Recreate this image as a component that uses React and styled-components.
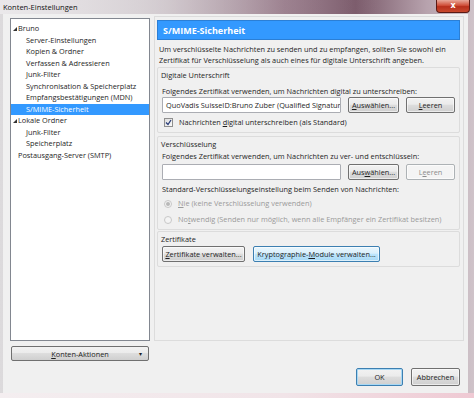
import React from "react";
import styled, { createGlobalStyle } from "styled-components";

const Global = createGlobalStyle`
  html, body { margin: 0; padding: 0; }
  body {
    width: 474px; height: 398px; overflow: hidden;
    background: linear-gradient(90deg, #f4eef0 0%, #f1e4e8 60%, #efc9d3 100%);
    font-family: "Open Sans", "Noto Sans", sans-serif;
    font-size: 7.35px;
    color: #1e1e1e;
  }
`;

const Window = styled.div`
  width: 474px;
  height: 393px;
  display: flex;
  flex-direction: column;
  background: linear-gradient(90deg, #dcdadc 0%, #c9c1c6 30%, #9c8290 60%, #7a5a6a 75%, #b7a2ad 90%, #cfc3c9 100%);
`;

const TitleBar = styled.div`
  height: 14px;
  display: flex;
  align-items: center;
  justify-content: space-between;
  padding-left: 3px;
  font-size: 7.5px;
  color: #111;
  background: linear-gradient(90deg, rgba(235,233,235,0.95) 0%, rgba(220,214,218,0.6) 35%, rgba(160,130,145,0.3) 60%, rgba(0,0,0,0) 80%);
`;

const CloseBtn = styled.div`
  width: 32px;
  height: 12px;
  margin-right: 4px;
  align-self: flex-start;
  border: 1px solid #5a1a14;
  border-top: none;
  border-radius: 0 0 4px 4px;
  background: linear-gradient(#e8a89a 0%, #d0503a 45%, #b8301c 55%, #c8482e 100%);
  color: #fff;
  font-family: "DejaVu Sans", sans-serif;
  font-weight: bold;
  font-size: 8px;
  display: flex;
  align-items: center;
  justify-content: center;
  line-height: 1;
`;

const Body = styled.div`
  flex: 1;
  margin: 0 6px 0 3px;
  background: #f0f0f0;
  display: flex;
  flex-direction: column;
  padding: 2px 0 0 7px;
`;

const Main = styled.div`
  display: flex;
  gap: 4px;
  height: 348px;
`;

const LeftCol = styled.div`
  width: 140px;
  display: flex;
  flex-direction: column;
  padding-top: 2px;
`;

const Tree = styled.div`
  height: 323px;
  background: #fff;
  border: 1px solid #828790;
  padding-top: 4px;
  box-sizing: border-box;
`;

const TreeItem = styled.div`
  height: 11.5px;
  line-height: 11.5px;
  padding-left: ${p => p.$level === 1 ? 15 : 7}px;
  display: flex;
  align-items: center;
  background: ${p => p.$selected ? "#3399ff" : "transparent"};
  color: ${p => p.$selected ? "#fff" : "#1e1e1e"};
  white-space: nowrap;
`;

const Twisty = styled.svg`
  width: 4px;
  height: 4px;
  margin-left: -5px;
  margin-right: 1px;
`;

const ActionsBtn = styled.div`
  margin-top: 5px;
  height: 15px;
  margin-left: 1px;
  margin-right: 1px;
  border: 1px solid #707070;
  border-radius: 2px;
  background: linear-gradient(#f2f2f2 0%, #ebebeb 45%, #dddddd 50%, #cfcfcf 100%);
  display: flex;
  align-items: center;
  justify-content: center;
  position: relative;
  box-sizing: border-box;
`;

const DropArrow = styled.span`
  position: absolute;
  right: 6px;
  top: 3px;
  font-size: 6px;
`;

const RightPanel = styled.div`
  width: 310px;
  height: 325px;
  border: 1px solid #dcdcdc;
  box-sizing: border-box;
  padding: 3px 3px 0 2px;
  display: flex;
  flex-direction: column;
`;

const Header = styled.div`
  height: 20px;
  background: #3399ff;
  border: 1px solid #2b7fd6;
  box-sizing: border-box;
  color: #fff;
  font-weight: bold;
  font-size: 9px;
  display: flex;
  align-items: center;
  padding-left: 5px;
`;

const Desc = styled.div`
  margin-top: 4px;
  padding-left: 2px;
  line-height: 10.5px;
`;

const Group = styled.div`
  margin-top: ${p => p.$mt || 3}px;
  border: 1px solid #dcdcdc;
  border-radius: 2px;
  padding: 2px 4px 4px 4px;
  display: flex;
  flex-direction: column;
`;

const Caption = styled.div`
  line-height: 11px;
  margin-left: -1px;
  margin-bottom: ${p => p.$mb ?? 1}px;
`;

const Label = styled.div`
  line-height: 11px;
  margin-top: ${p => p.$mt || 0}px;
  color: ${p => p.$disabled ? "#9a9a9a" : "#1e1e1e"};
`;

const Row = styled.div`
  display: flex;
  align-items: center;
  gap: ${p => p.$gap || 7}px;
  margin-top: ${p => p.$mt || 0}px;
  padding-left: ${p => p.$indent || 0}px;
`;

const Input = styled.div`
  width: 181px;
  height: 16px;
  box-sizing: border-box;
  background: #fff;
  border: 1px solid #abadb3;
  border-radius: 1px;
  display: flex;
  align-items: center;
  padding-left: 3px;
  white-space: nowrap;
  overflow: hidden;
  text-overflow: clip;
`;

const Button = styled.div`
  width: ${p => p.$w}px;
  height: ${p => p.$h || 16}px;
  box-sizing: border-box;
  border: 1px solid ${p => p.$variant === "hover" ? "#3c7fb1" : p.$variant === "default" ? "#3c7fb1" : p.$disabled ? "#adb2b5" : "#707070"};
  border-radius: 2px;
  background: ${p => p.$variant === "hover"
    ? "linear-gradient(#eaf6fd 0%, #d9f0fc 45%, #bee6fd 50%, #a7d9f5 100%)"
    : p.$disabled
      ? "#f4f4f4"
      : "linear-gradient(#f2f2f2 0%, #ebebeb 45%, #dddddd 50%, #cfcfcf 100%)"};
  box-shadow: ${p => p.$variant === "default" ? "inset 0 0 0 1px #a8d8f4" : "inset 0 0 0 1px rgba(255,255,255,0.6)"};
  color: ${p => p.$disabled ? "#8d8d8d" : "#1e1e1e"};
  display: flex;
  align-items: center;
  justify-content: center;
  white-space: nowrap;
  flex-shrink: 0;
`;

const Check = styled.div`
  width: 9px;
  height: 9px;
  box-sizing: border-box;
  border: 1px solid #8f8f8f;
  background: linear-gradient(135deg, #dcdcdc, #fbfbfb);
  display: flex;
  align-items: center;
  justify-content: center;
`;

const Radio = styled.div`
  width: 8px;
  height: 8px;
  border-radius: 50%;
  box-sizing: border-box;
  border: 1px solid #c8c8c8;
  background: #f4f4f4;
  display: flex;
  align-items: center;
  justify-content: center;
  &::after {
    content: "";
    display: ${p => p.$checked ? "block" : "none"};
    width: 4px; height: 4px; border-radius: 50%;
    background: #b8b8b8;
  }
`;

const Spacer = styled.div`flex: 1;`;

const Footer = styled.div`
  display: flex;
  justify-content: flex-end;
  gap: 8px;
  padding-right: 8px;
  margin-top: 4px;
`;

const U = styled.span`text-decoration: underline;`;

const tree = [
  { label: "Bruno", level: 0, twisty: true },
  { label: "Server-Einstellungen", level: 1 },
  { label: "Kopien & Ordner", level: 1 },
  { label: "Verfassen & Adressieren", level: 1 },
  { label: "Junk-Filter", level: 1 },
  { label: "Synchronisation & Speicherplatz", level: 1 },
  { label: "Empfangsbestätigungen (MDN)", level: 1 },
  { label: "S/MIME-Sicherheit", level: 1, selected: true },
  { label: "Lokale Ordner", level: 0, twisty: true },
  { label: "Junk-Filter", level: 1 },
  { label: "Speicherplatz", level: 1 },
  { label: "Postausgang-Server (SMTP)", level: 0 },
];

export default function App() {
  return (
    <>
      <Global />
      <Window>
        <TitleBar>
          <span>Konten-Einstellungen</span>
          <CloseBtn>x</CloseBtn>
        </TitleBar>
        <Body>
          <Main>
            <LeftCol>
              <Tree>
                {tree.map((t, i) => (
                  <TreeItem key={i} $level={t.level} $selected={t.selected}>
                    {t.twisty && (
                      <Twisty viewBox="0 0 4 4"><polygon points="4,0 4,4 0,4" fill="#333" /></Twisty>
                    )}
                    {t.label}
                  </TreeItem>
                ))}
              </Tree>
              <ActionsBtn>
                <span><U>K</U>onten-Aktionen</span>
                <DropArrow>▾</DropArrow>
              </ActionsBtn>
            </LeftCol>
            <RightPanel>
              <Header>S/MIME-Sicherheit</Header>
              <Desc>
                Um verschlüsselte Nachrichten zu senden und zu empfangen, sollten Sie sowohl ein<br />
                Zertifikat für Verschlüsselung als auch eines für digitale Unterschrift angeben.
              </Desc>
              <Group $mt={2}>
                <Caption $mb={5}>Digitale Unterschrift</Caption>
                <Label>Folgendes Zertifikat verwenden, um Nachrichten digital zu unterschreiben:</Label>
                <Row $mt={0}>
                  <Input>QuoVadis SuisseID:Bruno Zuber (Qualified Signature)</Input>
                  <Button $w={51}><span><U>A</U>uswählen...</span></Button>
                  <Button $w={49}><span><U>L</U>eeren</span></Button>
                </Row>
                <Row $mt={4} $gap={6} $indent={2}>
                  <Check>
                    <svg width="7" height="7" viewBox="0 0 7 7"><path d="M1 3.5 L3 5.5 L6 1" stroke="#2b3f7a" strokeWidth="1.3" fill="none" /></svg>
                  </Check>
                  <Label>Nachrichten <U>d</U>igital unterschreiben (als Standard)</Label>
                </Row>
              </Group>
              <Group $mt={3}>
                <Caption $mb={1}>Verschlüsselung</Caption>
                <Label>Folgendes Zertifikat verwenden, um Nachrichten zu ver- und entschlüsseln:</Label>
                <Row $mt={2}>
                  <Input />
                  <Button $w={51}><span>Aus<U>w</U>ählen...</span></Button>
                  <Button $w={49} $disabled><span>L<U>e</U>eren</span></Button>
                </Row>
                <Label $mt={4}>Standard-Verschlüsselungseinstellung beim Senden von Nachrichten:</Label>
                <Row $mt={3} $gap={6} $indent={2}>
                  <Radio $checked />
                  <Label $disabled><U>N</U>ie (keine Verschlüsselung verwenden)</Label>
                </Row>
                <Row $mt={5} $gap={6} $indent={2}>
                  <Radio />
                  <Label $disabled>No<U>t</U>wendig (Senden nur möglich, wenn alle Empfänger ein Zertifikat besitzen)</Label>
                </Row>
              </Group>
              <Group $mt={1}>
                <Caption>Zertifikate</Caption>
                <Row $gap={8}>
                  <Button $w={83}><span><U>Z</U>ertifikate verwalten...</span></Button>
                  <Button $w={127} $variant="hover"><span>Kryptographie-<U>M</U>odule verwalten...</span></Button>
                </Row>
              </Group>
              <Spacer />
            </RightPanel>
          </Main>
          <Footer>
            <Button $w={47} $h={18} $variant="default">OK</Button>
            <Button $w={49} $h={18}>Abbrechen</Button>
          </Footer>
        </Body>
      </Window>
    </>
  );
}
